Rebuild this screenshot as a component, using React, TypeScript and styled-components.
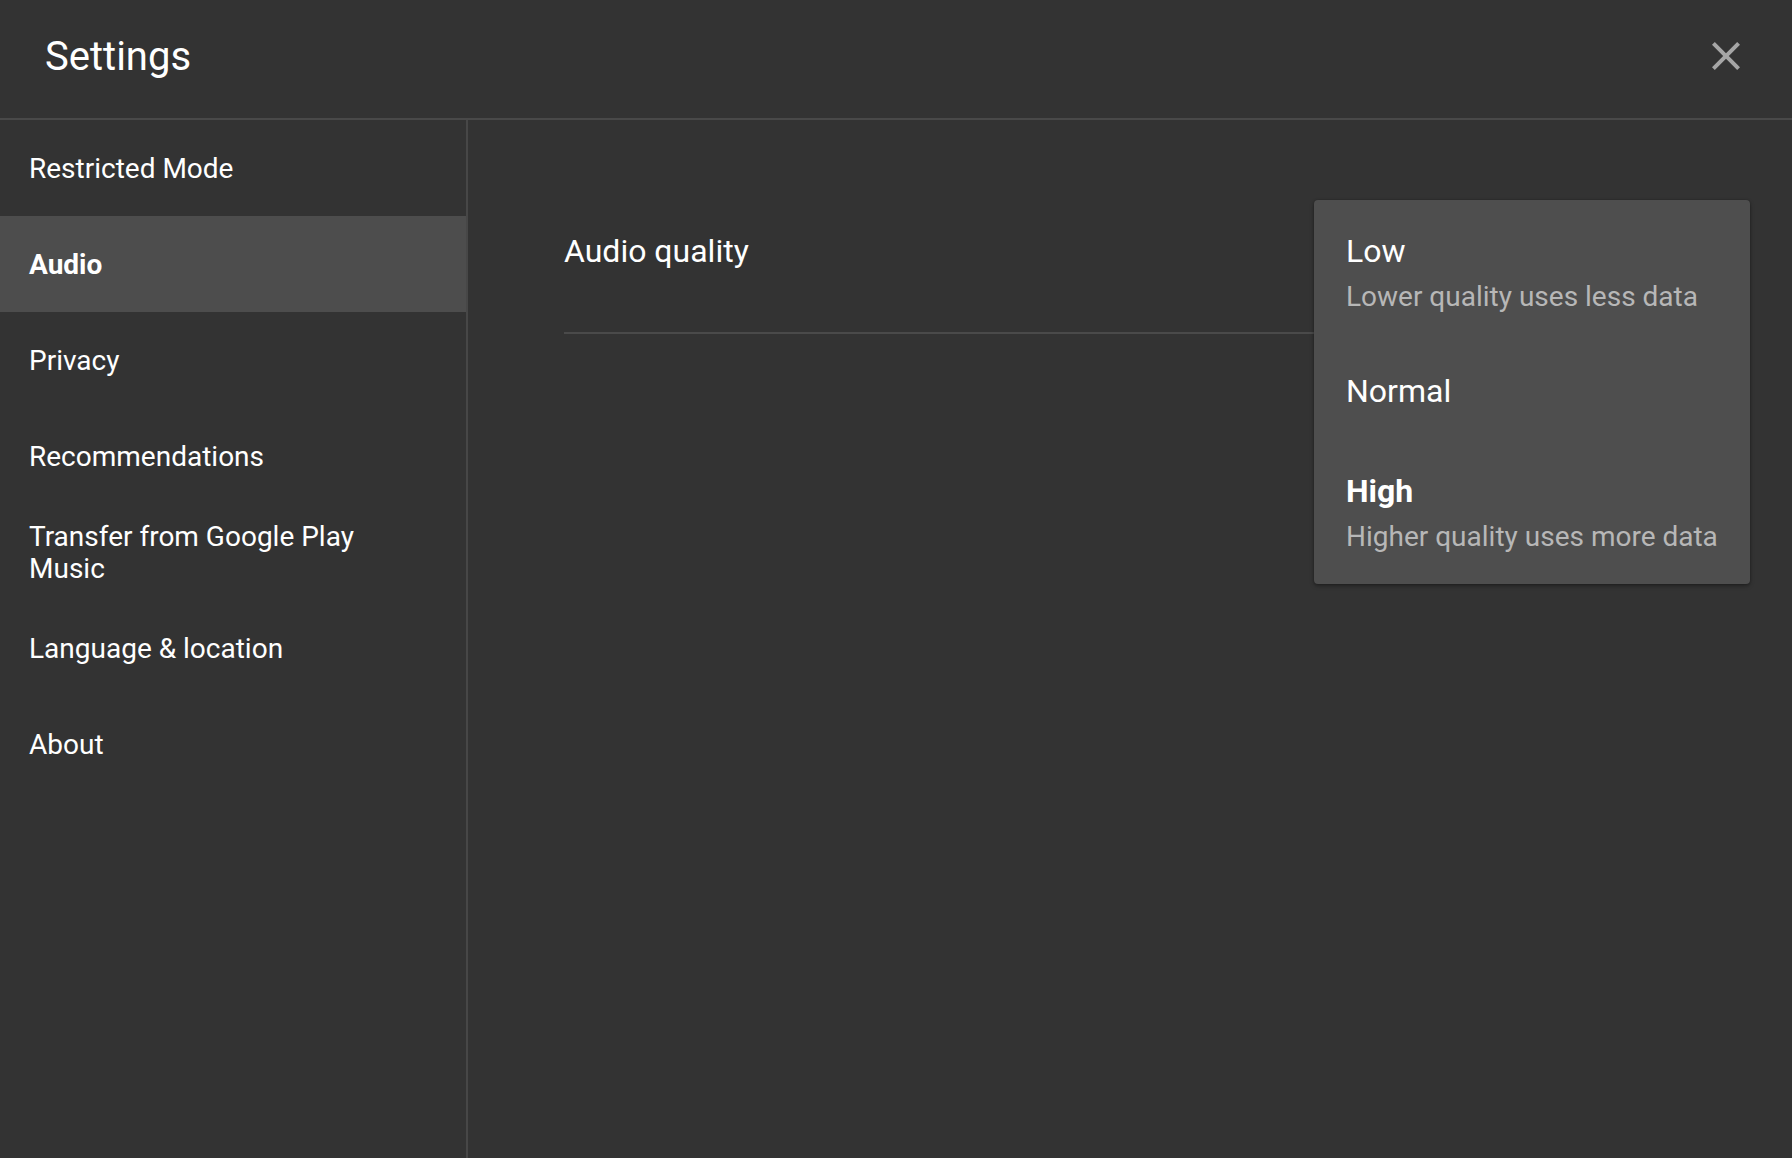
import styled, { createGlobalStyle } from "styled-components";

const GlobalStyle = createGlobalStyle`
  * {
    box-sizing: border-box;
  }
  html,
  body {
    margin: 0;
    height: 100%;
    background-color: #333333;
  }
  body {
    font-family: Roboto, "Noto Sans", sans-serif;
    color: #ffffff;
  }
`;

interface Option {
  label: string;
  hint?: string;
  selected?: boolean;
}

const navItems = [
  "Restricted Mode",
  "Audio",
  "Privacy",
  "Recommendations",
  "Transfer from Google Play Music",
  "Language & location",
  "About",
];

const qualityOptions: Option[] = [
  { label: "Low", hint: "Lower quality uses less data" },
  { label: "Normal" },
  { label: "High", hint: "Higher quality uses more data", selected: true },
];

const CloseIcon = () => (
  <svg width="48" height="48" viewBox="0 0 24 24" aria-hidden="true">
    <path
      fill="#a6a6a6"
      d="M19 6.41L17.59 5 12 10.59 6.41 5 5 6.41 10.59 12 5 17.59 6.41 19 12 13.41 17.59 19 19 17.59 13.41 12z"
    />
  </svg>
);

const App = () => {
  return (
    <Page>
      <GlobalStyle />
      <Header>
        <Title>Settings</Title>
        <CloseButton aria-label="Close">
          <CloseIcon />
        </CloseButton>
      </Header>

      <Body>
        <Sidebar>
          {navItems.map((item) => (
            <NavItem key={item} $active={item === "Audio"}>
              {item}
            </NavItem>
          ))}
        </Sidebar>

        <Content>
          <SettingRow>
            <SettingLabel>Audio quality</SettingLabel>
            <Menu>
              {qualityOptions.map((option) => (
                <MenuOption key={option.label}>
                  <OptionLabel $selected={option.selected}>{option.label}</OptionLabel>
                  {option.hint && <OptionHint>{option.hint}</OptionHint>}
                </MenuOption>
              ))}
            </Menu>
          </SettingRow>
        </Content>
      </Body>
    </Page>
  );
};

const Page = styled.div`
  display: flex;
  flex-direction: column;
  height: 100vh;
  background-color: #333333;
`;

const Header = styled.header`
  display: flex;
  justify-content: space-between;
  align-items: flex-start;
  height: 120px;
  padding: 33px 42px 0 45px;
  border-bottom: 2px solid #494949;
  flex-shrink: 0;
`;

const Title = styled.h1`
  margin: 0;
  font-size: 40px;
  line-height: 48px;
  font-weight: 400;
  color: #ffffff;
`;

const CloseButton = styled.button`
  display: flex;
  padding: 0;
  margin-top: -1px;
  border: none;
  background: none;
  cursor: pointer;
`;

const Body = styled.div`
  display: flex;
  flex: 1;
  min-height: 0;
`;

const Sidebar = styled.nav`
  width: 468px;
  border-right: 2px solid #474747;
  flex-shrink: 0;
`;

const NavItem = styled.div<{ $active?: boolean }>`
  display: flex;
  align-items: center;
  min-height: 96px;
  padding: 2px 48px 0 29px;
  font-size: 28px;
  line-height: 32px;
  font-weight: ${({ $active }) => ($active ? 700 : 400)};
  color: #ffffff;
  background-color: ${({ $active }) => ($active ? "#4d4d4d" : "transparent")};
`;

const Content = styled.main`
  flex: 1;
  padding: 51px 42px 0 96px;
`;

const SettingRow = styled.div`
  position: relative;
  display: flex;
  align-items: center;
  height: 163px;
  border-bottom: 2px solid #4a4a4a;
`;

const SettingLabel = styled.div`
  margin-bottom: 2px;
  font-size: 32px;
  line-height: 44px;
  color: #ffffff;
`;

const Menu = styled.div`
  position: absolute;
  top: 29px;
  right: 0;
  width: 436px;
  padding-top: 4px;
  background-color: #4e4e4e;
  border-radius: 4px;
  box-shadow: 0 2px 4px rgba(0, 0, 0, 0.35), 0 0 2px rgba(0, 0, 0, 0.25);
  z-index: 2;
`;

const MenuOption = styled.div`
  display: flex;
  flex-direction: column;
  min-height: 100px;
  padding: 25px 32px 23px;
`;

const OptionLabel = styled.div<{ $selected?: boolean }>`
  font-size: 32px;
  line-height: 44px;
  font-weight: ${({ $selected }) => ($selected ? 700 : 400)};
  color: #ffffff;
`;

const OptionHint = styled.div`
  font-size: 28px;
  line-height: 48px;
  color: #b7b7b7;
`;

export default App;
